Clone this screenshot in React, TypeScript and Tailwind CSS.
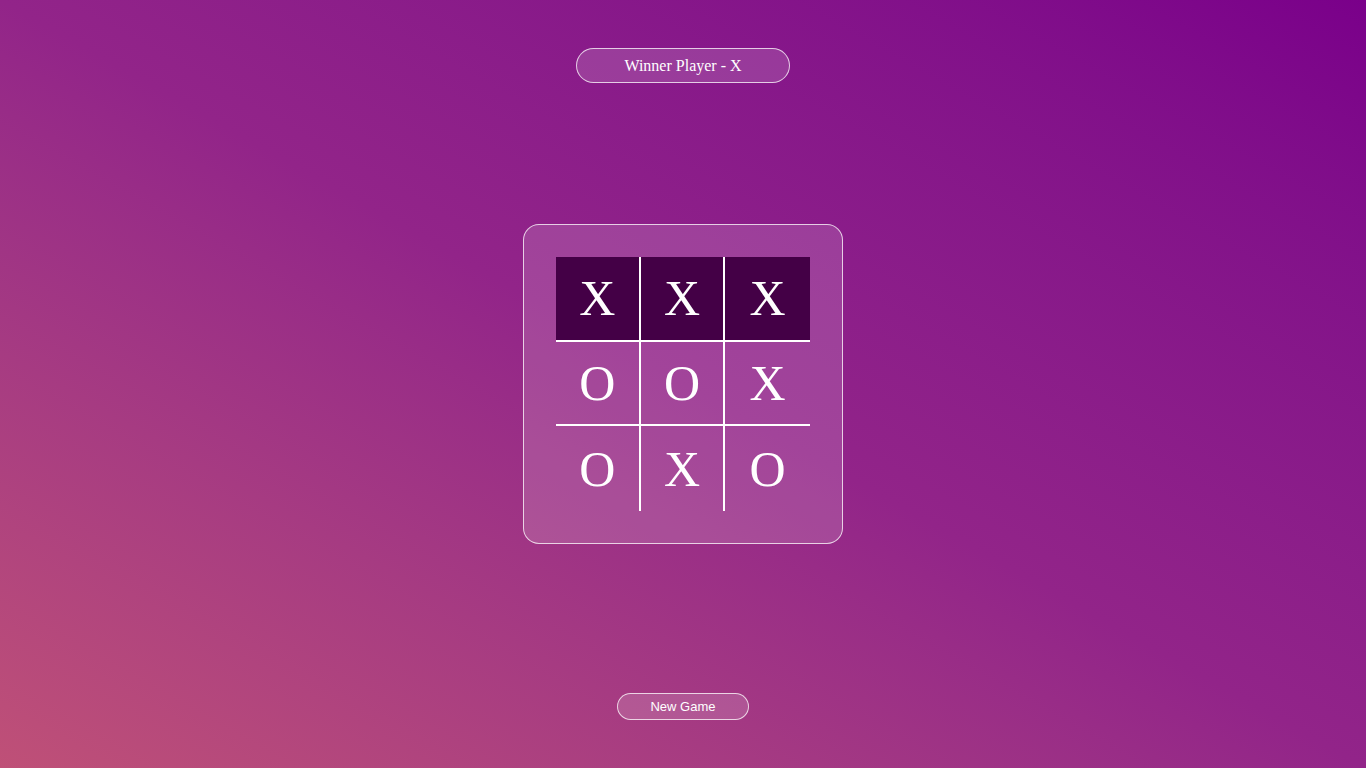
const board = ['X', 'X', 'X', 'O', 'O', 'X', 'O', 'X', 'O'];
const winLine = [0, 1, 2];

function Cell({ value, index }: { value: string; index: number }) {
  const col = index % 3;
  const row = Math.floor(index / 3);
  const win = winLine.includes(index);
  return (
    <div
      className={`flex items-center justify-center border-white text-[50px] leading-none text-white ${
        col < 2 ? 'border-r-2' : ''
      } ${row < 2 ? 'border-b-2' : ''} ${win ? 'bg-[#440046]' : ''}`}
    >
      {value}
    </div>
  );
}

export default function App() {
  return (
    <div
      className="flex h-screen w-full flex-col items-center justify-between bg-linear-to-tr from-[#bf5077] via-[#922489] to-[#7a008a] py-12"
      style={{ fontFamily: '"Liberation Serif", serif' }}
    >
      <div className="flex h-[35px] w-[214px] items-center justify-center rounded-full border border-white/75 bg-white/15 text-base text-white">
        Winner Player - X
      </div>

      <div className="mb-2 rounded-2xl border border-white/75 bg-white/15 p-8">
        <div className="grid h-[254px] w-[254px] grid-cols-3 grid-rows-3">
          {board.map((v, i) => (
            <Cell key={i} value={v} index={i} />
          ))}
        </div>
      </div>

      <button
        className="flex h-[27px] w-[132px] items-center justify-center rounded-full border border-white/75 bg-white/15 text-[13px] text-white"
        style={{ fontFamily: '"Liberation Sans", Arial, sans-serif' }}
      >
        New Game
      </button>
    </div>
  );
}
